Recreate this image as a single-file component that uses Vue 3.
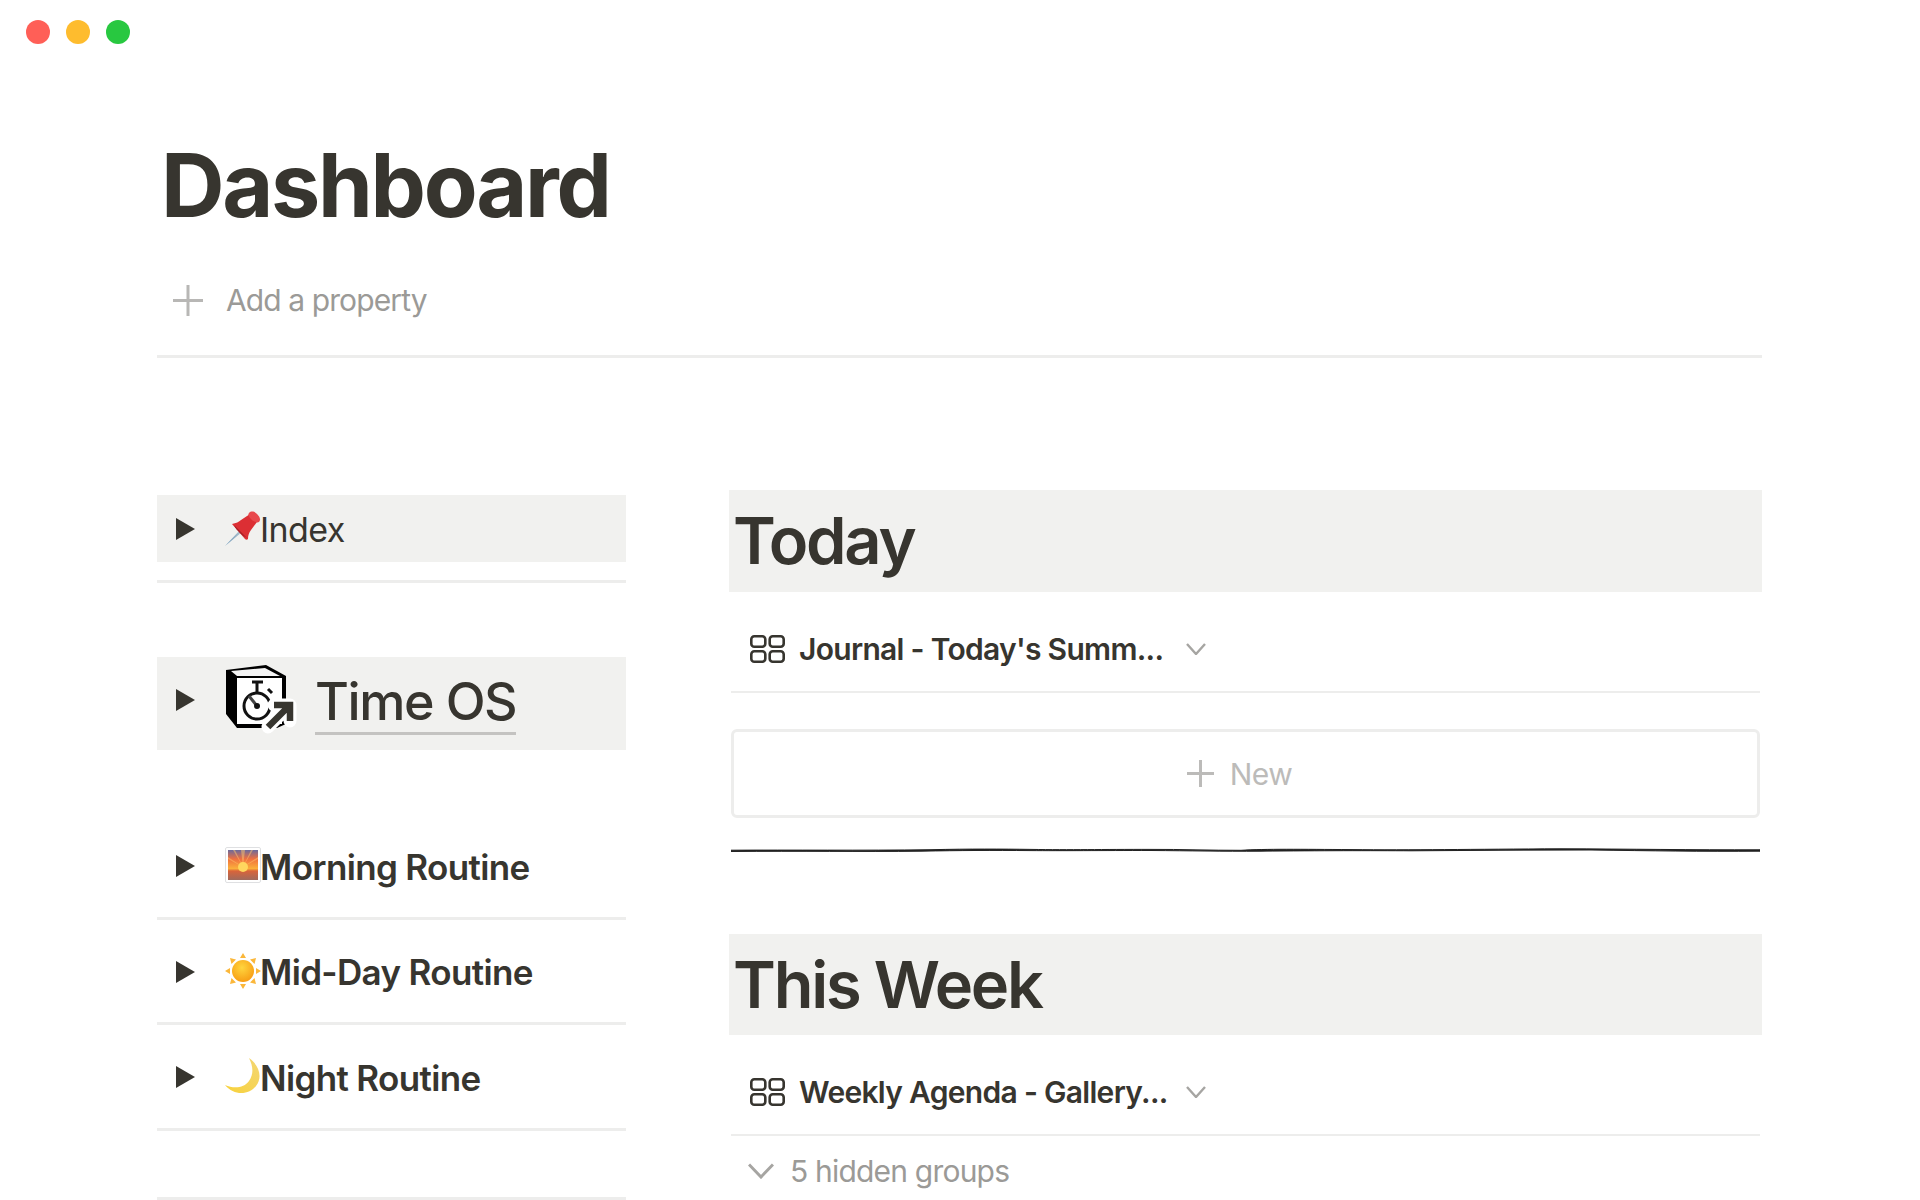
<template>
  <div class="page">
    <div class="traffic">
      <span class="light red"></span>
      <span class="light yellow"></span>
      <span class="light green"></span>
    </div>

    <h1 class="title">Dashboard</h1>

    <div class="prop-row">
      <svg class="plus" width="30" height="31" viewBox="0 0 30 31">
        <path d="M15 0V31M0 15.5H30" stroke="#b8b7b5" stroke-width="3" fill="none" />
      </svg>
      <span class="prop-text">Add a property</span>
    </div>

    <div class="columns">
      <!-- left toggles -->
      <div class="left">
        <div class="toggle index-row">
          <span class="arrow"></span>
          <svg class="emoji" width="36" height="36" viewBox="0 0 36 36">
            <defs>
              <linearGradient id="needle" x1="0" y1="1" x2="1" y2="0">
                <stop offset="0" stop-color="#5d8fb5" />
                <stop offset="1" stop-color="#b9c6cf" />
              </linearGradient>
            </defs>
            <path d="M0 35L15 19l2 2z" fill="url(#needle)" />
            <path d="M7 13c4-1 7-2 9-4l9-6 7 8-6 8c-2 3-3 5-3 9-1 1-2 1-3 0z" fill="#dc2f34" />
            <path d="M24 2c2-2 5-2 8 1s4 6 2 8c-2 1-5 0-8-3s-3-5-2-6z" fill="#e8484c" />
            <path d="M9 14l13 13c-2-1-5-3-7-5s-5-5-6-8z" fill="#a81f25" />
          </svg>
          <span class="toggle-text regular">Index</span>
        </div>
        <div class="line index-line"></div>

        <div class="toggle time-row">
          <span class="arrow"></span>
          <svg class="time-icon" width="72" height="70" viewBox="0 0 72 70">
            <path d="M1 6L41 1 61 12V60L52 64H12L1 50z" fill="#000" />
            <path d="M6 7L40 4 55 12H12z" fill="#f4f4f4" />
            <path d="M12 14H57V60H12z" fill="#fff" />
            <circle cx="32" cy="42" r="13" fill="none" stroke="#111" stroke-width="3" />
            <path d="M27 18H38M32 18V28M43 25l4 4" stroke="#111" stroke-width="3" fill="none" />
            <path d="M32 42L24 32" stroke="#444" stroke-width="3" fill="none" />
            <circle cx="32" cy="42" r="3" fill="#111" />
            <path d="M43 63L64 42M49 41H65V57" stroke="#fff" stroke-width="13" fill="none" stroke-linecap="round" stroke-linejoin="round" />
            <path d="M43 63L64 42M49 41H65V57" stroke="#37352f" stroke-width="6.500" fill="none" />
          </svg>
          <span class="time-text">Time OS</span>
        </div>

        <div class="routines">
          <div v-for="r in routines" :key="r.name" class="toggle routine">
            <span class="arrow"></span>
            <svg v-if="r.icon === 'sunrise'" class="emoji" width="36" height="36" viewBox="0 0 36 36">
              <defs>
                <linearGradient id="sky" x1="0" y1="0" x2="0" y2="1">
                  <stop offset="0" stop-color="#6b6a9c" />
                  <stop offset="0.3" stop-color="#f0703f" />
                  <stop offset="0.62" stop-color="#fbb03b" />
                  <stop offset="0.7" stop-color="#d9643a" />
                  <stop offset="1" stop-color="#a06a5c" />
                </linearGradient>
              </defs>
              <rect x="0.5" y="0.5" width="35" height="35" rx="1.5" fill="#fff" stroke="#dfe0e2" />
              <rect x="3" y="3" width="30" height="30" fill="url(#sky)" />
              <path d="M18 20L8 3h2zM18 20L16 3h4zM18 20L26 3h2zM18 20L3 10v2zM18 20L33 10v2z" fill="#ffc46b" opacity="0.5" />
              <circle cx="18" cy="20" r="5" fill="#ffd75e" />
            </svg>
            <svg v-else-if="r.icon === 'sun'" class="emoji" width="36" height="36" viewBox="0 0 36 36">
              <defs>
                <radialGradient id="sunfill" cx="0.45" cy="0.35" r="0.7">
                  <stop offset="0" stop-color="#ffd53e" />
                  <stop offset="1" stop-color="#f79a12" />
                </radialGradient>
              </defs>
              <path d="M18 0l3 5h-6zM18 36l3-5h-6zM0 18l5-3v6zM36 18l-5-3v6zM5 5l6 1.500-4.500 4.500zM31 5l-6 1.500 4.500 4.500zM5 31l6-1.500-4.500-4.500zM31 31l-6-1.500 4.500-4.500z" fill="#fbb73a" />
              <circle cx="18" cy="18" r="11" fill="url(#sunfill)" />
            </svg>
            <svg v-else class="emoji" width="36" height="36" viewBox="0 0 36 36">
              <defs>
                <linearGradient id="moonfill" x1="0" y1="1" x2="1" y2="0">
                  <stop offset="0" stop-color="#f8d23a" />
                  <stop offset="1" stop-color="#f3d675" />
                </linearGradient>
              </defs>
              <path d="M24 0C34 7 38 19 31 28 24 37 9 38 0 27c9 4 19 3 24-4 5-7 4-15 0-23z" fill="url(#moonfill)" />
            </svg>
            <span class="toggle-text">{{ r.name }}</span>
          </div>
          <div class="line last-line"></div>
        </div>
      </div>

      <!-- right column -->
      <div class="right">
        <h2 class="heading">Today</h2>
        <div class="db-row">
          <svg class="grid-icon" width="35" height="28" viewBox="0 0 35 28">
            <g fill="none" stroke="#37352f" stroke-width="2.6">
              <rect x="1.300" y="1.300" width="14" height="10.500" rx="3" />
              <rect x="19.700" y="1.300" width="14" height="10.500" rx="3" />
              <rect x="1.300" y="16.200" width="14" height="10.500" rx="3" />
              <rect x="19.700" y="16.200" width="14" height="10.500" rx="3" />
            </g>
          </svg>
          <span class="db-name">Journal - Today's Summ...</span>
          <svg class="chev" width="20" height="12" viewBox="0 0 20 12">
            <path d="M1 1L10 11 19 1" fill="none" stroke="#a6a5a2" stroke-width="2.400" />
          </svg>
        </div>
        <div class="new-box">
          <svg width="27" height="27" viewBox="0 0 27 27">
            <path d="M13.500 0V27M0 13.500H27" stroke="#bcbbb9" stroke-width="3" fill="none" />
          </svg>
          <span class="new-text">New</span>
        </div>
        <svg class="ink" width="1029" height="6" viewBox="0 0 1029 6" preserveAspectRatio="none">
          <path d="M0 3.200C60 2.800 130 3.600 200 2.700 240 1.800 270 2 300 2.400 340 3 370 2.300 420 2.400 450 2.200 480 3.400 510 3.300 535 1.800 570 2.300 620 2.600 680 3.200 740 2.200 830 1.800 900 2 960 3 1029 2.800V4.200C970 4.600 920 3.800 860 3 800 2.800 740 3.600 680 3.800 640 3.600 590 3.600 530 4.200 490 4.400 460 3.800 420 3.500 370 3.500 330 3.800 300 3.600 260 3.300 230 3.400 190 4.200 130 4.800 70 4 0 4.500z" fill="#222" stroke="#222" stroke-width="1" />
        </svg>

        <h2 class="heading week">This Week</h2>
        <div class="db-row">
          <svg class="grid-icon" width="35" height="28" viewBox="0 0 35 28">
            <g fill="none" stroke="#37352f" stroke-width="2.6">
              <rect x="1.300" y="1.300" width="14" height="10.500" rx="3" />
              <rect x="19.700" y="1.300" width="14" height="10.500" rx="3" />
              <rect x="1.300" y="16.200" width="14" height="10.500" rx="3" />
              <rect x="19.700" y="16.200" width="14" height="10.500" rx="3" />
            </g>
          </svg>
          <span class="db-name">Weekly Agenda - Gallery...</span>
          <svg class="chev" width="20" height="12" viewBox="0 0 20 12">
            <path d="M1 1L10 11 19 1" fill="none" stroke="#a6a5a2" stroke-width="2.400" />
          </svg>
        </div>
        <div class="hidden-row">
          <svg width="26" height="16" viewBox="0 0 26 16">
            <path d="M1 1.500L13 14 25 1.500" fill="none" stroke="#a6a5a2" stroke-width="3" />
          </svg>
          <span class="hidden-text">5 hidden groups</span>
        </div>
      </div>
    </div>
  </div>
</template>

<script setup>
const routines = [
  { name: 'Morning Routine', icon: 'sunrise' },
  { name: 'Mid-Day Routine', icon: 'sun' },
  { name: 'Night Routine', icon: 'moon' }
];
</script>

<style scoped>
.page {
  width: 1920px;
  height: 1200px;
  overflow: hidden;
  background: #fff;
  color: #37352f;
  font-family: Inter, "Liberation Sans", sans-serif;
  box-sizing: border-box;
  padding: 0 158px 0 157px;
}

.traffic {
  display: flex;
  gap: 16px;
  padding-top: 20px;
  margin-left: -131px;
}

.light {
  width: 24px;
  height: 24px;
  border-radius: 50%;
}

.red { background: #ff5f57; }
.yellow { background: #febc2e; }
.green { background: #28c840; }

.title {
  margin: 87px 0 0 4px;
  font-size: 88px;
  line-height: 108px;
  font-weight: 700;
  letter-spacing: -2.3px;
}

.prop-row {
  display: flex;
  align-items: center;
  gap: 23px;
  height: 110px;
  padding-left: 16px;
  margin-top: 6px;
  border-bottom: 3px solid #ededec;
}

.prop-text {
  font-size: 30px;
  color: #9b9a97;
  letter-spacing: -0.9px;
}

.columns {
  display: grid;
  grid-template-columns: 469px 1033px;
  column-gap: 103px;
  margin-top: 132px;
}

.toggle {
  display: flex;
  align-items: center;
}

.arrow {
  width: 0;
  height: 0;
  margin-left: 19px;
  margin-right: 30px;
  border-left: 19px solid #37352f;
  border-top: 11px solid transparent;
  border-bottom: 11px solid transparent;
  flex: none;
}

.emoji {
  flex: none;
  margin-right: -1px;
}

.toggle-text {
  padding-top: 3px;
  font-size: 35px;
  font-weight: 600;
  letter-spacing: -0.65px;
  white-space: nowrap;
}

.toggle-text.regular {
  font-size: 34px;
  font-weight: 400;
  letter-spacing: -0.6px;
  padding-top: 2px;
}

.index-row {
  height: 67px;
  margin-top: 5px;
  background: #f1f1ef;
}

.line {
  height: 3px;
  background: #ededec;
}

.index-line {
  margin-top: 18px;
}

.time-row {
  height: 93px;
  margin-top: 74px;
  background: #f1f1ef;
}

.time-row .arrow {
  margin-right: 31px;
  margin-top: -8px;
}

.time-icon {
  flex: none;
  margin-top: -9px;
  margin-left: -1px;
  margin-right: 18px;
}

.time-text {
  font-size: 52px;
  font-weight: 450;
  letter-spacing: -1.4px;
  line-height: 60px;
  border-bottom: 3px solid #c4c3c1;
  margin-top: -1px;
}

.routines {
  margin-top: 64px;
}

.routine {
  height: 105.500px;
  box-sizing: border-box;
  border-bottom: 3px solid #ededec;
}

.routine .arrow {
  margin-top: 2px;
}

.last-line {
  margin-top: 66px;
}

.heading {
  margin: 0;
  height: 102px;
  background: #f1f1ef;
  font-size: 65px;
  line-height: 102px;
  font-weight: 600;
  padding-left: 4px;
  letter-spacing: -2.2px;
}

.heading.week {
  height: 101px;
  margin-top: 81px;
}

.db-row {
  display: flex;
  align-items: center;
  height: 101px;
  margin: 0 2px;
  padding: 15px 0 0 19px;
  border-bottom: 2px solid #ededec;
  box-sizing: border-box;
}

.grid-icon {
  flex: none;
  margin-right: 14px;
}

.db-name {
  width: 372px;
  flex: none;
  font-size: 30px;
  font-weight: 600;
  letter-spacing: -0.7px;
  white-space: nowrap;
}

.chev {
  margin-left: 15px;
  flex: none;
}

.new-box {
  display: flex;
  align-items: center;
  justify-content: center;
  gap: 16px;
  height: 83px;
  margin: 36px 2px 0;
  border: 3px solid #ededec;
  border-radius: 6px;
  padding-right: 12px;
}

.new-text {
  font-size: 30px;
  color: #bcbbb9;
  letter-spacing: -0.5px;
}

.ink {
  display: block;
  margin: 29px 2px 0;
}

.hidden-row {
  display: flex;
  align-items: center;
  gap: 17px;
  height: 44px;
  margin-top: 13px;
  padding-left: 19px;
}

.hidden-text {
  font-size: 30px;
  color: #9b9a97;
  letter-spacing: -0.8px;
  margin-left: -1px;
}
</style>
